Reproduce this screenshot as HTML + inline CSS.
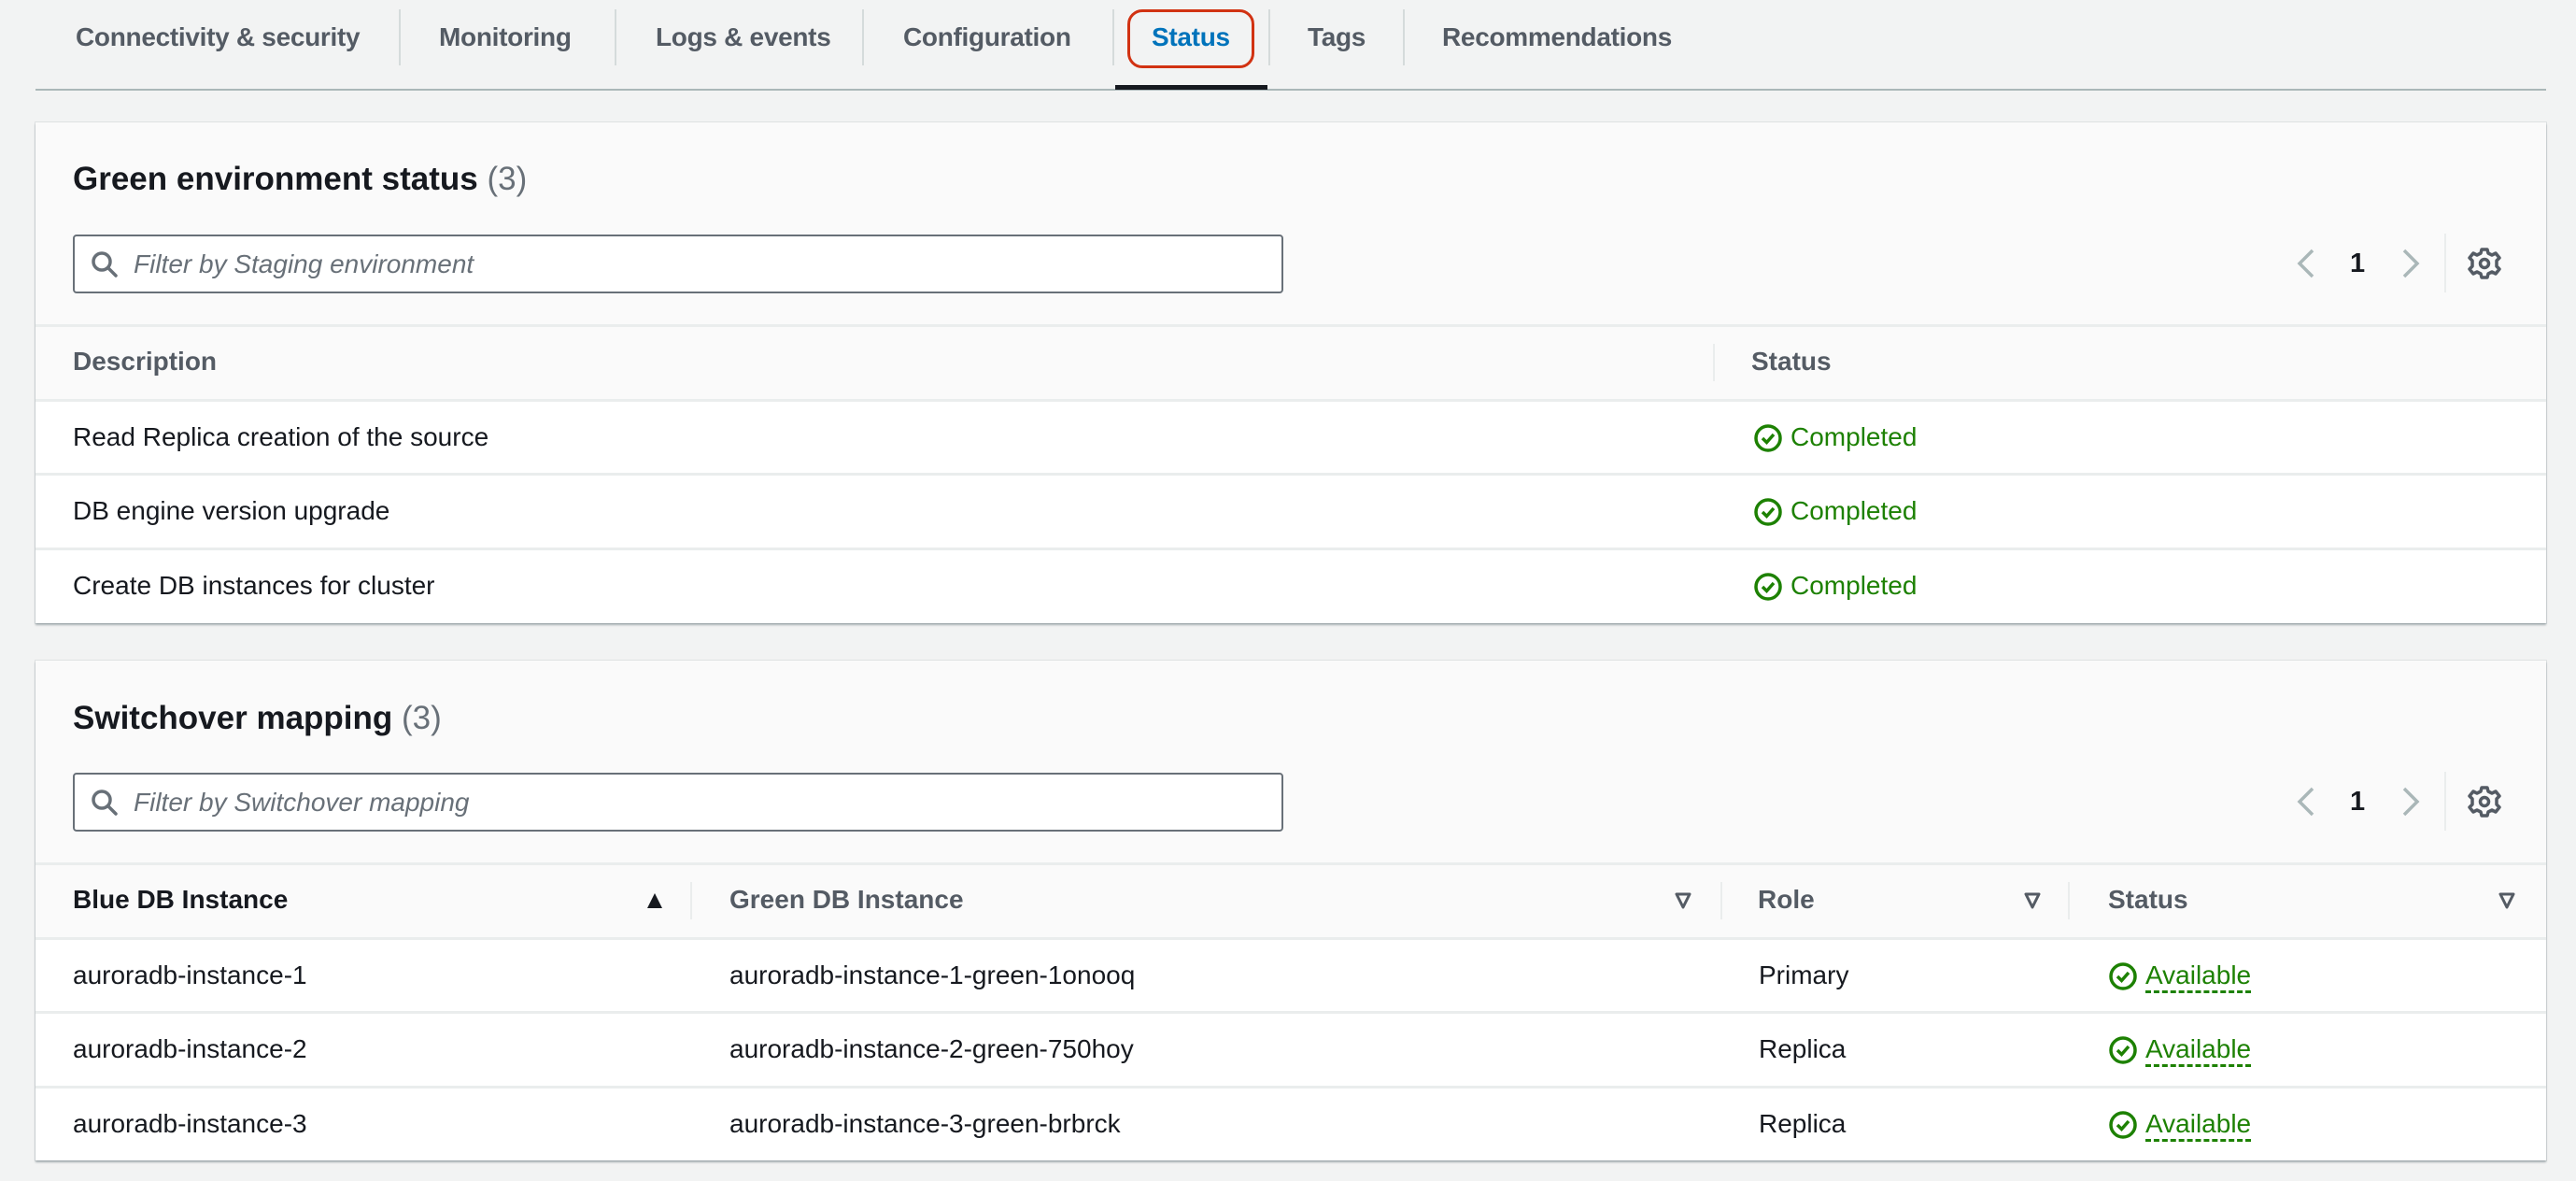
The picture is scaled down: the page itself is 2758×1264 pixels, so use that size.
<!DOCTYPE html>
<html><head><meta charset="utf-8">
<style>
*{margin:0;padding:0;box-sizing:border-box}
body{width:2758px;height:1264px;background:#f2f3f3;font-family:"Liberation Sans",Arial,sans-serif;position:relative;overflow:hidden;color:#16191f}
.a{position:absolute;white-space:nowrap}
.tab{position:absolute;top:20px;height:40px;line-height:40px;font-size:28px;font-weight:bold;color:#545b64;letter-spacing:-0.3px}
.tsep{position:absolute;top:10px;width:2px;height:60px;background:#d5dbdb}
.panel{position:absolute;left:38px;width:2688px;background:#fafafa;box-shadow:0 2px 2px rgba(0,28,36,.3),0 0 0 1px rgba(0,28,36,.08)}
.title{position:absolute;left:40px;font-size:35px;font-weight:bold;color:#16191f;height:50px;line-height:50px}
.title span{font-weight:normal;color:#687078}
.input{position:absolute;left:40px;width:1296px;height:63px;border:2px solid #687078;border-radius:4px;background:#fff}
.input .ph{position:absolute;left:63px;top:0;line-height:59px;font-size:28px;font-style:italic;color:#687078}
.input svg{position:absolute;left:16px;top:14px}
.hdr{position:absolute;left:0;width:2688px;height:80px;border-top:3px solid #eaeded;background:#fafafa}
.hdr .a{font-size:28px;font-weight:bold;color:#545b64;line-height:74px;top:0}
.csep{position:absolute;top:18px;width:2px;height:40px;background:#eaeded}
.row{position:absolute;left:0;width:2688px;height:81px;border-top:3px solid #eaeded;background:#fff}
.row .a{font-size:28px;line-height:76px;top:0;color:#16191f}
.ok{color:#1d8102 !important}
.ok svg{position:absolute;left:0;top:23px}
.ok b{font-weight:normal;margin-left:40px}
.dot b{border-bottom:3px dashed #1d8102;padding-bottom:1px}
.tri{position:absolute;top:29px}
</style></head><body>

<div class="tab" style="left:81px">Connectivity &amp; security</div>
<div class="tsep" style="left:427px"></div>
<div class="tab" style="left:470px">Monitoring</div>
<div class="tsep" style="left:658px"></div>
<div class="tab" style="left:702px">Logs &amp; events</div>
<div class="tsep" style="left:923px"></div>
<div class="tab" style="left:967px">Configuration</div>
<div class="tsep" style="left:1191px"></div>
<div class="tab" style="left:1233px;color:#0073bb">Status</div>
<div class="a" style="left:1207px;top:10px;width:136px;height:63px;border:3px solid #d13212;border-radius:16px"></div>
<div class="tsep" style="left:1358px"></div>
<div class="tab" style="left:1400px">Tags</div>
<div class="tsep" style="left:1502px"></div>
<div class="tab" style="left:1544px">Recommendations</div>
<div class="a" style="left:38px;top:95px;width:2688px;height:2px;background:#aab7b8"></div>
<div class="a" style="left:1194px;top:91px;width:163px;height:5px;background:#16191f"></div>

<!-- Panel 1 -->
<div class="panel" style="top:131px;height:536px">
  <div class="title" style="top:36px">Green environment status <span>(3)</span></div>
  <div class="input" style="top:120px">
    <svg width="32" height="32" viewBox="0 0 32 32"><circle cx="13" cy="13" r="9" fill="none" stroke="#687078" stroke-width="3.5"/><path d="M20 20l8 8" stroke="#687078" stroke-width="3.5" stroke-linecap="round"/></svg>
    <div class="ph">Filter by Staging environment</div>
  </div>
  <svg class="a" style="left:2419px;top:134px" width="24" height="34" viewBox="0 0 24 34"><path d="M19 3L5 17l14 14" fill="none" stroke="#aab7b8" stroke-width="3.5"/></svg>
  <div class="a" style="left:2478px;top:131px;font-size:29px;font-weight:bold;line-height:40px">1</div>
  <svg class="a" style="left:2531px;top:134px" width="24" height="34" viewBox="0 0 24 34"><path d="M5 3l14 14L5 31" fill="none" stroke="#aab7b8" stroke-width="3.5"/></svg>
  <div class="a" style="left:2579px;top:119px;width:2px;height:63px;background:#eaeded"></div>
  <svg class="a" style="left:2604px;top:133px" width="36" height="36" viewBox="0 0 36 36"><g fill="none" stroke="#545b64" stroke-width="3.5"><path d="M15 3h6l1 4 4 2 4-2 4 5-3 3v6l3 3-4 5-4-2-4 2-1 4h-6l-1-4-4-2-4 2-4-5 3-3v-6l-3-3 4-5 4 2 4-2z" stroke-linejoin="round"/><circle cx="18" cy="18" r="4.5"/></g></svg>
  <div class="hdr" style="top:216px">
    <div class="a" style="left:40px">Description</div>
    <div class="csep" style="left:1796px"></div>
    <div class="a" style="left:1837px">Status</div>
  </div>
  <div class="row" style="top:296px"><div class="a" style="left:40px">Read Replica creation of the source</div><div class="a ok" style="left:1839px"><svg width="32" height="32" viewBox="0 0 32 32"><circle cx="16" cy="16" r="13" fill="none" stroke="#1d8102" stroke-width="3.5"/><path d="M10 16l4.5 4.5L22 12" fill="none" stroke="#1d8102" stroke-width="3.5"/></svg><b>Completed</b></div></div>
  <div class="row" style="top:375px"><div class="a" style="left:40px">DB engine version upgrade</div><div class="a ok" style="left:1839px"><svg width="32" height="32" viewBox="0 0 32 32"><circle cx="16" cy="16" r="13" fill="none" stroke="#1d8102" stroke-width="3.5"/><path d="M10 16l4.5 4.5L22 12" fill="none" stroke="#1d8102" stroke-width="3.5"/></svg><b>Completed</b></div></div>
  <div class="row" style="top:455px"><div class="a" style="left:40px">Create DB instances for cluster</div><div class="a ok" style="left:1839px"><svg width="32" height="32" viewBox="0 0 32 32"><circle cx="16" cy="16" r="13" fill="none" stroke="#1d8102" stroke-width="3.5"/><path d="M10 16l4.5 4.5L22 12" fill="none" stroke="#1d8102" stroke-width="3.5"/></svg><b>Completed</b></div></div>
</div>

<!-- Panel 2 -->
<div class="panel" style="top:707px;height:535px">
  <div class="title" style="top:37px">Switchover mapping <span>(3)</span></div>
  <div class="input" style="top:120px">
    <svg width="32" height="32" viewBox="0 0 32 32"><circle cx="13" cy="13" r="9" fill="none" stroke="#687078" stroke-width="3.5"/><path d="M20 20l8 8" stroke="#687078" stroke-width="3.5" stroke-linecap="round"/></svg>
    <div class="ph">Filter by Switchover mapping</div>
  </div>
  <svg class="a" style="left:2419px;top:134px" width="24" height="34" viewBox="0 0 24 34"><path d="M19 3L5 17l14 14" fill="none" stroke="#aab7b8" stroke-width="3.5"/></svg>
  <div class="a" style="left:2478px;top:131px;font-size:29px;font-weight:bold;line-height:40px">1</div>
  <svg class="a" style="left:2531px;top:134px" width="24" height="34" viewBox="0 0 24 34"><path d="M5 3l14 14L5 31" fill="none" stroke="#aab7b8" stroke-width="3.5"/></svg>
  <div class="a" style="left:2579px;top:119px;width:2px;height:63px;background:#eaeded"></div>
  <svg class="a" style="left:2604px;top:133px" width="36" height="36" viewBox="0 0 36 36"><g fill="none" stroke="#545b64" stroke-width="3.5"><path d="M15 3h6l1 4 4 2 4-2 4 5-3 3v6l3 3-4 5-4-2-4 2-1 4h-6l-1-4-4-2-4 2-4-5 3-3v-6l-3-3 4-5 4 2 4-2z" stroke-linejoin="round"/><circle cx="18" cy="18" r="4.5"/></g></svg>
  <div class="hdr" style="top:216px">
    <div class="a" style="left:40px;color:#16191f">Blue DB Instance</div>
    <svg class="tri" style="left:654px" width="18" height="18" viewBox="0 0 18 18"><path d="M9 1L17 17H1z" fill="#16191f"/></svg>
    <div class="csep" style="left:701px"></div>
    <div class="a" style="left:743px">Green DB Instance</div>
    <svg class="tri" style="left:1755px" width="18" height="18" viewBox="0 0 18 18"><path d="M2 2h14L9 16z" fill="none" stroke="#545b64" stroke-width="3" stroke-linejoin="round"/></svg>
    <div class="csep" style="left:1804px"></div>
    <div class="a" style="left:1844px">Role</div>
    <svg class="tri" style="left:2129px" width="18" height="18" viewBox="0 0 18 18"><path d="M2 2h14L9 16z" fill="none" stroke="#545b64" stroke-width="3" stroke-linejoin="round"/></svg>
    <div class="csep" style="left:2176px"></div>
    <div class="a" style="left:2219px">Status</div>
    <svg class="tri" style="left:2637px" width="18" height="18" viewBox="0 0 18 18"><path d="M2 2h14L9 16z" fill="none" stroke="#545b64" stroke-width="3" stroke-linejoin="round"/></svg>
  </div>
  <div class="row" style="top:296px"><div class="a" style="left:40px">auroradb-instance-1</div><div class="a" style="left:743px">auroradb-instance-1-green-1onooq</div><div class="a" style="left:1845px">Primary</div><div class="a ok dot" style="left:2219px"><svg width="32" height="32" viewBox="0 0 32 32"><circle cx="16" cy="16" r="13" fill="none" stroke="#1d8102" stroke-width="3.5"/><path d="M10 16l4.5 4.5L22 12" fill="none" stroke="#1d8102" stroke-width="3.5"/></svg><b>Available</b></div></div>
  <div class="row" style="top:375px"><div class="a" style="left:40px">auroradb-instance-2</div><div class="a" style="left:743px">auroradb-instance-2-green-750hoy</div><div class="a" style="left:1845px">Replica</div><div class="a ok dot" style="left:2219px"><svg width="32" height="32" viewBox="0 0 32 32"><circle cx="16" cy="16" r="13" fill="none" stroke="#1d8102" stroke-width="3.5"/><path d="M10 16l4.5 4.5L22 12" fill="none" stroke="#1d8102" stroke-width="3.5"/></svg><b>Available</b></div></div>
  <div class="row" style="top:455px;height:80px"><div class="a" style="left:40px">auroradb-instance-3</div><div class="a" style="left:743px">auroradb-instance-3-green-brbrck</div><div class="a" style="left:1845px">Replica</div><div class="a ok dot" style="left:2219px"><svg width="32" height="32" viewBox="0 0 32 32"><circle cx="16" cy="16" r="13" fill="none" stroke="#1d8102" stroke-width="3.5"/><path d="M10 16l4.5 4.5L22 12" fill="none" stroke="#1d8102" stroke-width="3.5"/></svg><b>Available</b></div></div>
</div>
</body></html>
